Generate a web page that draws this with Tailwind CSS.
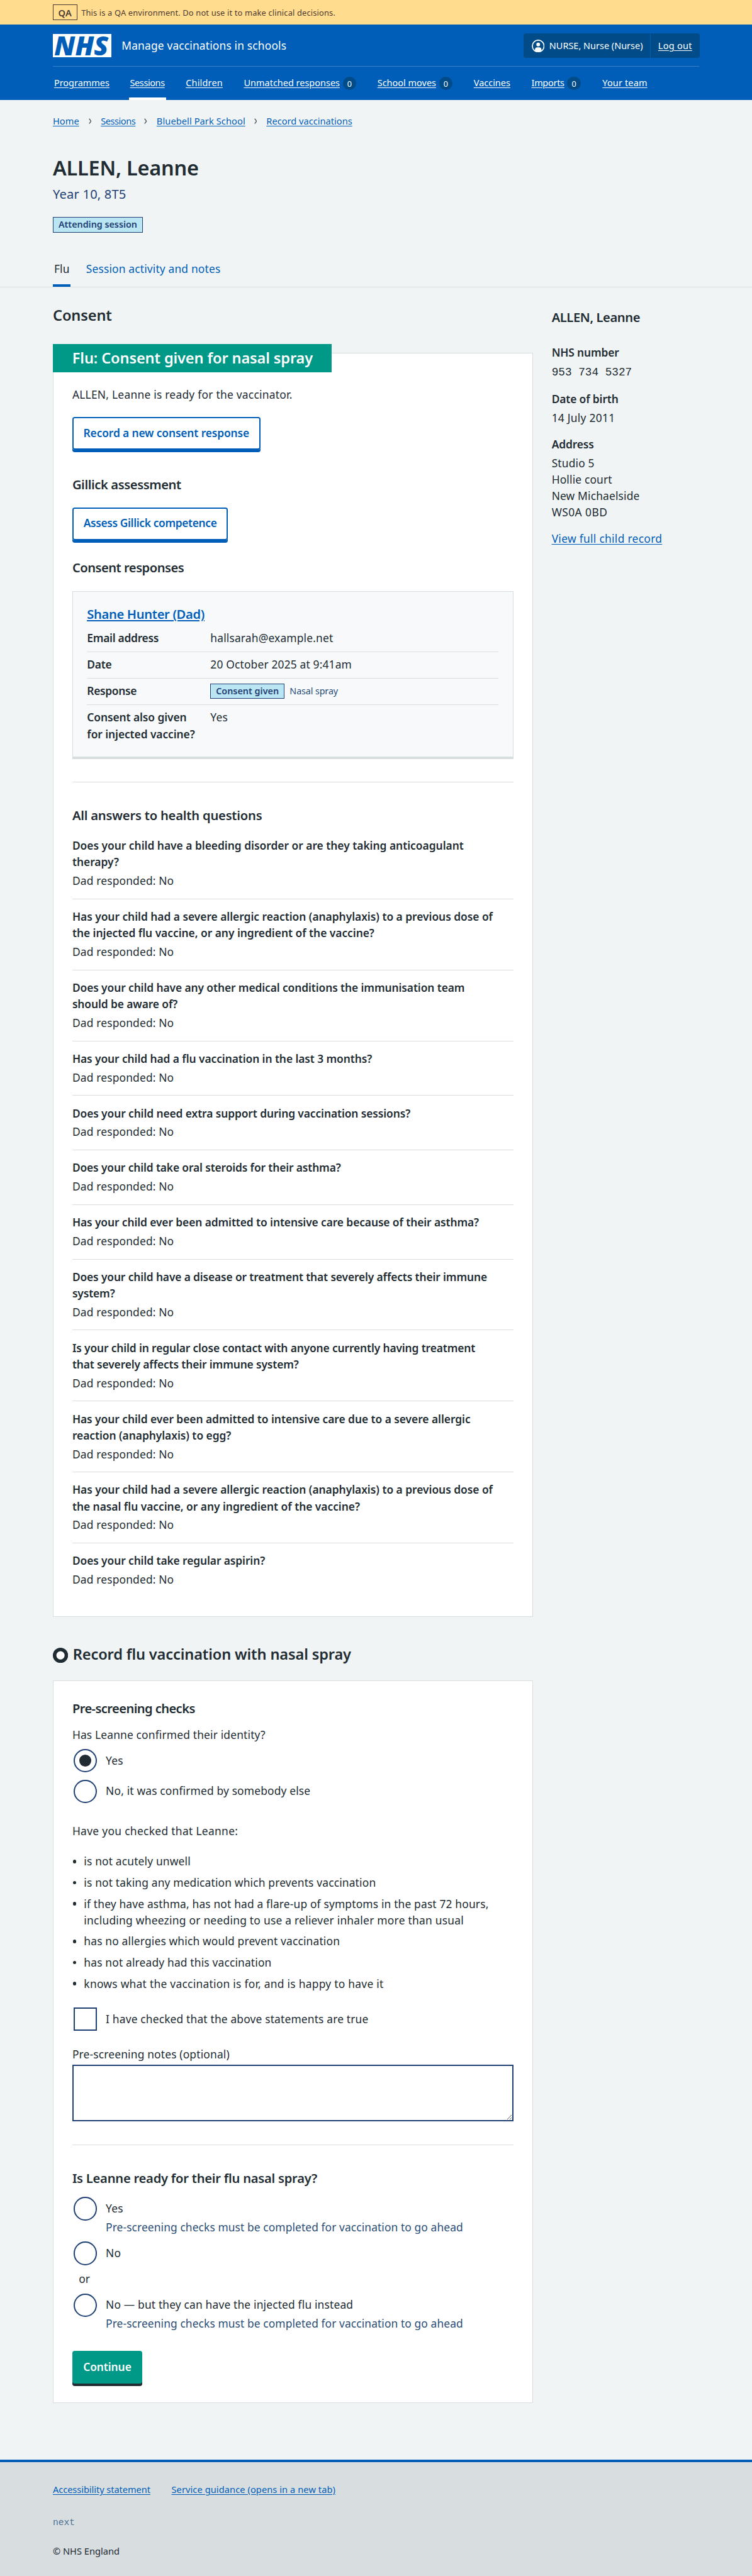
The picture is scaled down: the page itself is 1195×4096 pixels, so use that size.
<!DOCTYPE html>
<html lang="en" class="text-[14.9375px]">
<head>
<meta charset="utf-8">
<title>ALLEN, Leanne – Manage vaccinations in schools</title>
<script src="https://cdn.jsdelivr.net/npm/@tailwindcss/browser@4"></script>
</head>
<body class="bg-[#f0f4f5] font-['Noto_Sans','Open_Sans',sans-serif] text-[1.165rem] leading-7 tracking-[.009em] text-[#212b32]">

<div class="flex h-10.5 items-center bg-[#ffdc8e] px-22.5 text-[#4b3a33]">
  <strong class="flex h-6.5 items-center border border-[#4b3a33] px-2 pt-0.5 text-[.98rem] leading-none font-semibold tracking-[.02em]">QA</strong>
  <span class="ml-1.75 pt-0.5 text-[.862rem] leading-5">This is a QA environment. Do not use it to make clinical decisions.</span>
</div>

<header class="h-32 bg-[#005eb8] px-22.5 text-white">
  <div class="flex h-18 items-start justify-between border-b border-[#3a80c6] pt-3.75">
    <div class="flex items-center">
      <svg class="mt-0.25 h-10 w-25" viewBox="0 0 100 40" aria-label="NHS">
        <rect width="100" height="40" fill="#fff"/>
        <text x="2.5" y="36.5" font-family="'Noto Sans','Open Sans',sans-serif" font-size="45.5" font-weight="900" font-style="italic" fill="#005eb8" textLength="92" lengthAdjust="spacingAndGlyphs" letter-spacing="0">NHS</text>
      </svg>
      <span class="ml-4.25">Manage vaccinations in schools</span>
    </div>
    <div class="-mr-0.25 flex h-10.5 items-stretch rounded-[.25rem] bg-[#004b88] text-[.97rem] leading-6 tracking-normal">
      <div class="flex items-center border-r border-[#005eb8] pr-3 pl-3.5">
        <svg class="h-5.5 w-5.5" viewBox="0 0 22 22">
          <circle cx="11" cy="11" r="10" fill="none" stroke="#fff" stroke-width="1.8"/>
          <circle cx="11" cy="8.3" r="3.2" fill="#fff"/>
          <path d="M5.5 18.5V17a4 4 0 0 1 4-4h3a4 4 0 0 1 4 4v1.500a10 10 0 0 1-11 0Z" fill="#fff"/>
        </svg>
        <span class="ml-2">NURSE, Nurse (Nurse)</span>
      </div>
      <a class="flex items-center px-3.25 tracking-[.02em] underline underline-offset-2" href="#">Log out</a>
    </div>
  </div>
  <nav class="flex h-14 text-[.97rem] leading-6 tracking-normal">
    <a class="mr-8.25 ml-0.5 pt-4" href="#"><span class="underline underline-offset-2">Programmes</span></a>
    <a class="mr-8.5 border-b-4 border-white px-0.5 pt-4" href="#"><span class="tracking-[-.028em] underline underline-offset-2">Sessions</span></a>
    <a class="mr-9 pt-4" href="#"><span class="tracking-[.012em] underline underline-offset-2">Children</span></a>
    <a class="mr-9 flex pt-4" href="#"><span class="underline underline-offset-2">Unmatched responses</span><span class="mt-0.25 ml-1.25 flex h-5.5 w-5.75 items-center justify-center rounded-full bg-[#004b88] pt-0.25 text-[.85rem]">0</span></a>
    <a class="mr-9 flex pt-4" href="#"><span class="underline underline-offset-2">School moves</span><span class="mt-0.25 ml-1.25 flex h-5.5 w-5.75 items-center justify-center rounded-full bg-[#004b88] pt-0.25 text-[.85rem]">0</span></a>
    <a class="mr-9 pt-4" href="#"><span class="underline underline-offset-2">Vaccines</span></a>
    <a class="mr-9.25 flex pt-4" href="#"><span class="tracking-[-.02em] underline underline-offset-2">Imports</span><span class="mt-0.25 ml-1.25 flex h-5.5 w-5.75 items-center justify-center rounded-full bg-[#004b88] pt-0.25 text-[.85rem]">0</span></a>
    <a class="pt-4" href="#"><span class="tracking-[.01em] underline underline-offset-2">Your team</span></a>
  </nav>
</header>

<div class="border-b border-[#d8dde0] px-22.5">
  <nav class="flex items-center pt-6 text-[.98rem] leading-6 tracking-normal text-[#005eb8]">
    <a class="underline underline-offset-2" href="#">Home</a>
    <svg class="mx-4 h-2.5 w-1.25 text-[#425563]" viewBox="0 0 5 10"><path d="M.8.8 4 5 .8 9.200" fill="none" stroke="currentColor" stroke-width="1.4"/></svg>
    <a class="tracking-[-.033em] underline underline-offset-2" href="#">Sessions</a>
    <svg class="mr-4 ml-3.75 h-2.5 w-1.25 text-[#425563]" viewBox="0 0 5 10"><path d="M.8.8 4 5 .8 9.200" fill="none" stroke="currentColor" stroke-width="1.4"/></svg>
    <a class="tracking-[.005em] underline underline-offset-2" href="#">Bluebell Park School</a>
    <svg class="mr-4 ml-3.75 h-2.5 w-1.25 text-[#425563]" viewBox="0 0 5 10"><path d="M.8.8 4 5 .8 9.200" fill="none" stroke="currentColor" stroke-width="1.4"/></svg>
    <a class="underline underline-offset-2" href="#">Record vaccinations</a>
  </nav>
  <h1 class="mt-11.5 text-[2.17rem] leading-11 font-semibold tracking-[-.006em]">ALLEN, Leanne</h1>
  <p class="mt-1.75 text-[1.35rem] leading-8 text-[#1f4073]">Year 10, 8T5</p>
  <strong class="mt-5.75 flex h-6.5 w-38.25 items-center justify-center border border-[#1f4073] bg-[#bae5f3] text-[.96rem] leading-none font-semibold tracking-[-.001em] text-[#1f4073]">Attending session</strong>
  <div class="mt-11.75 flex">
    <span class="border-b-4 border-[#005eb8] px-0.5 pb-3.25">Flu</span>
    <a class="ml-6.5 text-[#005eb8]" href="#">Session activity and notes</a>
  </div>
</div>

<div class="flex px-22.5">
  <main class="w-204.25">
    <h2 class="mt-7.5 text-[1.58rem] leading-9 font-semibold tracking-[-.006em]">Consent</h2>

    <section class="mt-11.5 border border-[#d8dde0] bg-white pb-12.25">
      <h3 class="-mt-4 -ml-px flex h-12 w-118.5 items-center bg-[#009887] pl-8.25 text-[1.58rem] leading-9 font-semibold tracking-[-.006em] text-white">Flu: Consent given for nasal spray</h3>
      <div class="px-8">
        <p class="mt-5.75 tracking-[.014em]">ALLEN, Leanne is ready for the vaccinator.</p>
        <a class="mt-6.25 flex h-14 w-80 justify-center rounded-[.25rem] border-2 border-[#005eb8] pt-2.5 font-semibold tracking-[-.008em] text-[#005eb8] shadow-[0_4px_0_#005eb8]" href="#">Record a new consent response</a>
        <h4 class="mt-10.75 text-[1.35rem] leading-8 font-semibold tracking-[-.02em]">Gillick assessment</h4>
        <a class="mt-5.75 flex h-14 w-66.25 justify-center rounded-[.25rem] border-2 border-[#005eb8] pt-2.5 font-semibold tracking-[-.021em] text-[#005eb8] shadow-[0_4px_0_#005eb8]" href="#">Assess Gillick competence</a>
        <h4 class="mt-7.75 text-[1.35rem] leading-8 font-semibold tracking-[-.025em]">Consent responses</h4>

        <div class="mt-5.75 border border-b-4 border-[#d8dde0] bg-[#f7f9fb] px-6 pt-5.75 pb-6.25">
          <h4 class="text-[1.35rem] leading-8 font-semibold tracking-[-.017em] text-[#005eb8] underline decoration-2 underline-offset-2"><a href="#">Shane Hunter (Dad)</a></h4>
          <dl class="mt-0.75">
            <div class="flex border-b border-[#d8dde0] pt-1.75 pb-2.25"><dt class="w-52.5 font-semibold tracking-[-.016em]">Email address</dt><dd>hallsarah@example.net</dd></div>
            <div class="flex border-b border-[#d8dde0] pt-1.75 pb-2.25"><dt class="w-52.5 font-semibold tracking-[-.016em]">Date</dt><dd>20 October 2025 at 9:41am</dd></div>
            <div class="flex border-b border-[#d8dde0] pt-1.75 pb-2.25"><dt class="w-52.5 font-semibold tracking-[-.018em]">Response</dt><dd class="flex h-7 items-center"><strong class="mt-0.5 flex h-6.5 w-31.5 items-center justify-center border border-[#1f4073] bg-[#bae5f3] text-[.96rem] leading-none font-semibold text-[#1f4073] tracking-[.002em]">Consent given</strong><span class="mt-0.5 ml-2.25 text-[.96rem] tracking-[-.008em] text-[#2a4d76]">Nasal spray</span></dd></div>
            <div class="flex pt-1.75"><dt class="w-52.5 font-semibold tracking-[-.005em]">Consent also given<br>for injected vaccine?</dt><dd>Yes</dd></div>
          </dl>
        </div>

        <hr class="mt-9.75 border-[#d8dde0]">
        <h4 class="mt-10 text-[1.35rem] leading-8 font-semibold tracking-[-.01em]">All answers to health questions</h4>

        <dl class="mt-5.25">
          <div class="mb-[.95rem] border-b border-[#d8dde0] pb-[1.04rem]"><dt class="font-semibold tracking-[-.001em]">Does your child have a bleeding disorder or are they taking anticoagulant<br>therapy?</dt><dd class="mt-1">Dad responded: No</dd></div>
          <div class="mb-[.95rem] border-b border-[#d8dde0] pb-[1.04rem]"><dt class="font-semibold tracking-[-.002em]">Has your child had a severe allergic reaction (anaphylaxis) to a previous dose of<br>the injected flu vaccine, or any ingredient of the vaccine?</dt><dd class="mt-1">Dad responded: No</dd></div>
          <div class="mb-[.95rem] border-b border-[#d8dde0] pb-[1.04rem]"><dt class="font-semibold tracking-[-.006em]">Does your child have any other medical conditions the immunisation team<br>should be aware of?</dt><dd class="mt-1">Dad responded: No</dd></div>
          <div class="mb-[.95rem] border-b border-[#d8dde0] pb-[1.04rem]"><dt class="font-semibold tracking-[-.005em]">Has your child had a flu vaccination in the last 3 months?</dt><dd class="mt-1">Dad responded: No</dd></div>
          <div class="mb-[.95rem] border-b border-[#d8dde0] pb-[1.04rem]"><dt class="font-semibold tracking-[-.006em]">Does your child need extra support during vaccination sessions?</dt><dd class="mt-1">Dad responded: No</dd></div>
          <div class="mb-[.95rem] border-b border-[#d8dde0] pb-[1.04rem]"><dt class="font-semibold tracking-[-.008em]">Does your child take oral steroids for their asthma?</dt><dd class="mt-1">Dad responded: No</dd></div>
          <div class="mb-[.95rem] border-b border-[#d8dde0] pb-[1.04rem]"><dt class="font-semibold tracking-[-.006em]">Has your child ever been admitted to intensive care because of their asthma?</dt><dd class="mt-1">Dad responded: No</dd></div>
          <div class="mb-[.95rem] border-b border-[#d8dde0] pb-[1.04rem]"><dt class="font-semibold tracking-[-.008em]">Does your child have a disease or treatment that severely affects their immune<br>system?</dt><dd class="mt-1">Dad responded: No</dd></div>
          <div class="mb-[.95rem] border-b border-[#d8dde0] pb-[1.04rem]"><dt class="font-semibold tracking-[-.008em]">Is your child in regular close contact with anyone currently having treatment<br>that severely affects their immune system?</dt><dd class="mt-1">Dad responded: No</dd></div>
          <div class="mb-[.95rem] border-b border-[#d8dde0] pb-[1.04rem]"><dt class="font-semibold tracking-[-.003em]">Has your child ever been admitted to intensive care due to a severe allergic<br>reaction (anaphylaxis) to egg?</dt><dd class="mt-1">Dad responded: No</dd></div>
          <div class="mb-[.95rem] border-b border-[#d8dde0] pb-[1.04rem]"><dt class="font-semibold tracking-[-.002em]">Has your child had a severe allergic reaction (anaphylaxis) to a previous dose of<br>the nasal flu vaccine, or any ingredient of the vaccine?</dt><dd class="mt-1">Dad responded: No</dd></div>
          <div><dt class="font-semibold tracking-[-.006em]">Does your child take regular aspirin?</dt><dd class="mt-1">Dad responded: No</dd></div>
        </dl>
      </div>
    </section>

    <h2 class="mt-11.5 flex items-center text-[1.58rem] leading-9 font-semibold tracking-[-.006em]">
      <svg class="mt-0.5 mr-2 h-6.5 w-6.5" viewBox="0 0 26 26"><circle cx="13" cy="13" r="10" fill="#fff" stroke="#212b32" stroke-width="6"/></svg>Record flu vaccination with nasal spray</h2>

    <section class="mt-6.5 border border-[#d8dde0] bg-white px-8 pb-8">
      <h3 class="mt-7.75 text-[1.35rem] leading-8 font-semibold tracking-[-.03em]">Pre-screening checks</h3>
      <p class="mt-3.5">Has Leanne confirmed their identity?</p>
      <div class="mt-2.75 ml-0.5 flex h-10"><span class="flex h-10 w-10 items-center justify-center rounded-full border-2 border-[#1f4073]"><span class="h-5 w-5 rounded-full bg-[#212b32]"></span></span><span class="mt-1.25 ml-3.75">Yes</span></div>
      <div class="mt-3 ml-0.5 flex h-10"><span class="h-10 w-10 rounded-full border-2 border-[#1f4073]"></span><span class="mt-1.25 ml-3.75">No, it was confirmed by somebody else</span></div>
      <p class="mt-8.25 tracking-[.018em]">Have you checked that Leanne:</p>
      <ul class="mt-6 space-y-2">
        <li class="flex"><span class="mt-[.72rem] mr-[.8rem] ml-0.25 h-1.5 w-1.5 rounded-full bg-[#212b32]"></span><span>is not acutely unwell</span></li>
        <li class="flex"><span class="mt-[.72rem] mr-[.8rem] ml-0.25 h-1.5 w-1.5 rounded-full bg-[#212b32]"></span><span>is not taking any medication which prevents vaccination</span></li>
        <li class="flex"><span class="mt-[.72rem] mr-[.8rem] ml-0.25 h-1.5 w-1.5 rounded-full bg-[#212b32]"></span><span>if they have asthma, has not had a flare-up of symptoms in the past 72 hours,<br><span class="tracking-[.014em]">including wheezing or needing to use a reliever inhaler more than usual</span></span></li>
        <li class="flex"><span class="mt-[.72rem] mr-[.8rem] ml-0.25 h-1.5 w-1.5 rounded-full bg-[#212b32]"></span><span>has no allergies which would prevent vaccination</span></li>
        <li class="flex"><span class="mt-[.72rem] mr-[.8rem] ml-0.25 h-1.5 w-1.5 rounded-full bg-[#212b32]"></span><span>has not already had this vaccination</span></li>
        <li class="flex"><span class="mt-[.72rem] mr-[.8rem] ml-0.25 h-1.5 w-1.5 rounded-full bg-[#212b32]"></span><span class="tracking-[.015em]">knows what the vaccination is for, and is happy to have it</span></li>
      </ul>
      <div class="mt-6.75 ml-0.5 flex h-10"><span class="h-10 w-10 border-2 border-[#1f4073]"></span><span class="mt-1.25 ml-3.75">I have checked that the above statements are true</span></div>
      <label class="mt-6.25 block" for="notes">Pre-screening notes (optional)</label>
      <textarea id="notes" class="mt-1.25 block h-24 w-full resize-y border-2 border-[#1f4073] bg-white"></textarea>
      <hr class="mt-10 border-[#d8dde0]">
      <h3 class="mt-10 text-[1.35rem] leading-8 font-semibold tracking-[-.012em]">Is Leanne ready for their flu nasal spray?</h3>
      <div class="mt-4 ml-0.5 flex h-10"><span class="h-10 w-10 rounded-full border-2 border-[#1f4073]"></span><span class="mt-1.25 ml-3.75">Yes</span></div>
      <p class="-mt-0.75 ml-14.25 tracking-[.005em] text-[#2a4d76]">Pre-screening checks must be completed for vaccination to go ahead</p>
      <div class="mt-2.75 ml-0.5 flex h-10"><span class="h-10 w-10 rounded-full border-2 border-[#1f4073]"></span><span class="mt-1.25 ml-3.75">No</span></div>
      <p class="mt-2.25 ml-2.75">or</p>
      <div class="mt-2.75 ml-0.5 flex h-10"><span class="h-10 w-10 rounded-full border-2 border-[#1f4073]"></span><span class="mt-1.25 ml-3.75">No — but they can have the injected flu instead</span></div>
      <p class="-mt-0.75 ml-14.25 tracking-[.005em] text-[#2a4d76]">Pre-screening checks must be completed for vaccination to go ahead</p>
      <button class="mt-8.25 flex h-14 w-29.75 justify-center rounded-[.25rem] bg-[#009887] pt-3.25 font-semibold tracking-[-.005em] text-white shadow-[0_4px_0_#212b32]">Continue</button>
    </section>
  </main>

  <aside class="ml-8">
    <h2 class="mt-9 text-[1.35rem] leading-8 font-semibold tracking-[-.02em]">ALLEN, Leanne</h2>
    <dl class="mt-7.25">
      <dt class="font-semibold tracking-[-.008em]">NHS number</dt><dd class="mt-1.5 font-['Liberation_Mono',monospace] text-[1.1875rem] tracking-normal">953 734 5327</dd>
      <dt class="mt-4.25 font-semibold tracking-[-.008em]">Date of birth</dt><dd class="mt-1 tracking-[.015em]">14 July 2011</dd>
      <dt class="mt-4.25 font-semibold tracking-[-.008em]">Address</dt><dd class="mt-1">Studio 5<br>Hollie court<br>New Michaelside<br><span class="tracking-[.025em]">WS0A 0BD</span></dd>
    </dl>
    <a class="mt-4.25 block tracking-[.017em] text-[#005eb8] underline underline-offset-2" href="#">View full child record</a>
  </aside>
</div>

<footer class="mt-24 h-50 border-t-4 border-[#005eb8] bg-[#d8dde0] px-22.5 pt-8.5 text-[.98rem] leading-6 tracking-normal">
  <div class="flex gap-9 text-[#005eb8]">
    <a class="tracking-[-.005em] underline underline-offset-2" href="#">Accessibility statement</a>
    <a class="tracking-[.005em] underline underline-offset-2" href="#">Service guidance (opens in a new tab)</a>
  </div>
  <p class="mt-8.25 font-['Liberation_Mono',monospace] text-[#4c7290]">next</p>
  <p class="mt-6.25">© NHS England</p>
</footer>
</body>
</html>
